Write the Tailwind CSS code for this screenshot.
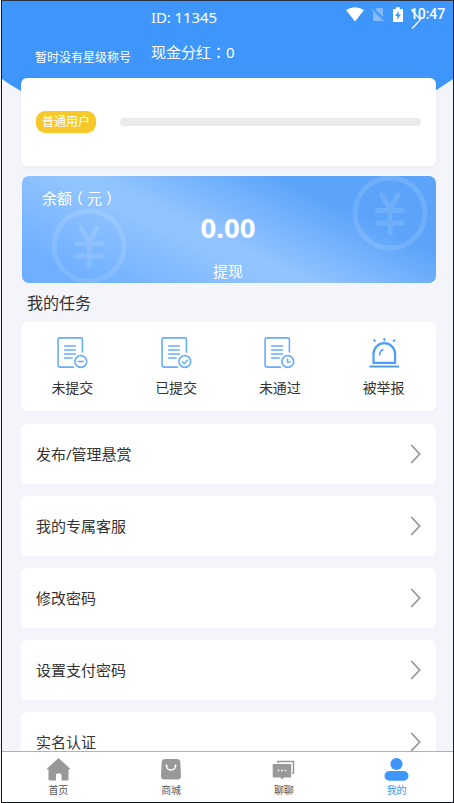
<!DOCTYPE html>
<html lang="zh-CN">
<head>
<meta charset="utf-8">
<title>我的</title>
<script src="https://cdn.jsdelivr.net/npm/@tailwindcss/browser@4"></script>
</head>
<body class="h-[803px] w-[454px] overflow-hidden bg-[#f5f5f7] pl-px font-['Noto_Sans','Noto_Sans_CJK_SC',sans-serif] text-[#333]">
<svg class="hidden">
  <symbol id="doc" viewBox="0 0 32 32"><g fill="none" stroke="#68adf9" stroke-width="1.6" stroke-linecap="round" stroke-linejoin="round"><path d="M25.4 15V2.5Q25.4.9 23.8.9H2.7Q1.1.9 1.1 2.5v26Q1.1 30.1 2.7 30.1H16.5"/><path d="M7.6 9H18.5M7.6 13H18.5M7.6 17H18.5M7.6 21H15.2"/><circle cx="23.8" cy="24.5" r="5.9"/></g></symbol>
  <symbol id="yen" viewBox="0 0 76 76"><g fill="none" stroke="currentColor" stroke-width="5"><circle cx="38" cy="38" r="35"/><path stroke-linecap="round" stroke-linejoin="round" d="M30 20l8 14 8-14M38 34v24M25.500 35.500h25M25.500 48h25"/></g></symbol>
  <symbol id="next" viewBox="0 0 11 20"><path d="M1.200 1l8.500 9-8.500 9" fill="none" stroke="currentColor" stroke-width="1.800"/></symbol>
</svg>
<div class="relative flex h-[803px] flex-col overflow-hidden border border-[#111a26] border-t-[#2b3344] bg-[#f4f5fa]">
  <svg class="absolute left-0 top-0 h-[100px] w-[451px]" viewBox="0 0 451 100" preserveAspectRatio="none"><path d="M0 0H451V78L433 90L418 99H34L19 90Q8 84 0 78Z" fill="#3e96fa"/></svg>
  <div class="absolute right-[8px] top-[5px] flex h-4 items-center text-white">
    <svg class="mr-[7px] h-[15px] w-[18px]" viewBox="0 0 18 15"><path d="M0 3Q9-2.500 18 3L9 14.500Z" fill="currentColor"/></svg>
    <svg class="mr-[8px] h-[15px] w-[14px]" viewBox="0 0 14 15"><path d="M2 4L6 1h6v13H2Z" fill="#82bafb"/><path d="M1 1l13 13" stroke="#3e96fa" stroke-width="2.500"/><path d="M.5 2l12.500 12.500" stroke="#82bafb"/></svg>
    <svg class="mr-[7px] h-[15px] w-[10px]" viewBox="0 0 10 15"><path d="M0 2h3V.2h4V2h3v13H0Z" fill="currentColor"/><path d="M6 4L2 9h2.500L3.800 13 8 7.500H5.500Z" fill="#3e96fa"/></svg>
    <span class="text-[14px]/[16px] font-medium font-[Roboto] tracking-[-0.1px]">10:47</span>
  </div>
  <svg class="absolute left-[409px] top-[9px] h-[19px] w-[11px] text-white"><path d="M1.200 1l8.300 8.500-8.300 9" fill="none" stroke="currentColor" stroke-width="1.200"/></svg>

  <header class="relative flex h-[77px] shrink-0 text-white">
    <p class="w-[149px] pl-[33px] pt-[48px] text-[12px]/[18px] whitespace-nowrap">暂时没有星级称号</p>
    <div class="flex flex-col gap-[15px] pt-[6px] text-[15px]/[20px]"><p class="tracking-[-0.1px]">ID: 11345</p><p>现金分红<span lang="zh-TW" class="font-['Noto_Sans_CJK_TC',sans-serif] leading-none">：</span>0</p></div>
  </header>

  <main class="relative flex min-h-0 flex-1 flex-col overflow-hidden pl-[19px] pr-[17px]">
    <section class="flex h-[88px] shrink-0 items-center rounded-md bg-white px-[15px] shadow-[0_2px_6px_rgba(0,0,0,0.04)]">
      <span class="h-[22px] w-[60px] rounded-[9px] bg-[#f7c829] text-center text-[12px]/[22px] text-white">普通用户</span>
      <div class="ml-6 h-2 flex-1 rounded-full bg-[#ebebeb]"></div>
    </section>

    <section class="relative ml-px mt-[10px] flex h-[107px] shrink-0 flex-col items-center overflow-hidden rounded-[7px] bg-[linear-gradient(206deg,#5ca4fa_25%,#92c4ff_54%,#92c4ff_60%,#6eafff_90%)] text-white">
      <svg class="absolute left-[29px] top-[32px] size-[76px] text-white/12"><use href="#yen"/></svg>
      <svg class="absolute right-[8px] top-[-1px] size-[76px] text-white/12"><use href="#yen"/></svg>
      <h2 class="relative mt-[12px] self-start pl-5 text-[15px]/[20px]">余额<span class="relative -left-1">（</span>元<span class="relative left-1">）</span></h2>
      <p class="relative mt-[4px] mr-[2px] text-[27.5px]/[32px] font-bold">0.00</p>
      <p class="relative mt-[17px] mr-[2px] text-[15px]/[20px]">提现</p>
    </section>

    <h2 class="mt-[10px] h-[29px] shrink-0 pl-[6px] text-[16px]/[20px]">我的任务</h2>

    <section class="grid h-[89px] shrink-0 grid-cols-4 rounded-md bg-white pt-[15px] text-center text-[14px]/[20px] shadow-[0_2px_6px_rgba(0,0,0,0.02)]">
      <div class="flex flex-col items-center gap-[9px]"><svg class="size-8" viewBox="0 0 32 32"><use href="#doc"/><path d="M20.500 24.500h6.500" stroke="#68adf9" stroke-width="1.500"/></svg><span class="mr-px">未提交</span></div>
      <div class="flex flex-col items-center gap-[9px]"><svg class="size-8" viewBox="0 0 32 32"><use href="#doc"/><path d="M20.800 24.300l2.400 2.300 3.800-3.800" fill="none" stroke="#68adf9" stroke-width="1.500"/></svg><span class="mr-px">已提交</span></div>
      <div class="flex flex-col items-center gap-[9px]"><svg class="size-8" viewBox="0 0 32 32"><use href="#doc"/><path d="M23.500 21.500v3.500h3.200" fill="none" stroke="#68adf9" stroke-width="1.500"/></svg><span class="mr-px">未通过</span></div>
      <div class="flex flex-col items-center gap-[9px]"><svg class="size-8" viewBox="0 0 32 32" fill="none" stroke="#4c9dfa"><path d="M5.500 25.800V17a10.800 10.800 0 0 1 21.600 0v8.800Z" stroke-width="2.200"/><path d="M11.500 18.500q.2-5 4-6" stroke-width="1.500"/><path d="M1.500 29.500h29.500" stroke-width="2"/><path d="M16.300 1v3M5.500 2.500l2 2.200M27.100 2.500l-2 2.200" stroke-width="1.800"/></svg><span class="mr-px">被举报</span></div>
    </section>

    <nav class="mt-[13px] flex flex-col gap-3 text-[15px]/[20px]">
      <a class="flex h-[60px] shrink-0 items-center justify-between rounded-md bg-white px-[15px]">发布/管理悬赏<svg class="h-5 w-[11px] text-[#999]"><use href="#next"/></svg></a>
      <a class="flex h-[60px] shrink-0 items-center justify-between rounded-md bg-white px-[15px]">我的专属客服<svg class="h-5 w-[11px] text-[#999]"><use href="#next"/></svg></a>
      <a class="flex h-[60px] shrink-0 items-center justify-between rounded-md bg-white px-[15px]">修改密码<svg class="h-5 w-[11px] text-[#999]"><use href="#next"/></svg></a>
      <a class="flex h-[60px] shrink-0 items-center justify-between rounded-md bg-white px-[15px]">设置支付密码<svg class="h-5 w-[11px] text-[#999]"><use href="#next"/></svg></a>
      <a class="flex h-[60px] shrink-0 items-center justify-between rounded-md bg-white px-[15px]">实名认证<svg class="h-5 w-[11px] text-[#999]"><use href="#next"/></svg></a>
    </nav>
  </main>

  <footer class="relative grid h-[51px] shrink-0 grid-cols-4 border-t border-[#b2b2b2] bg-white pt-[5px] text-[10px]/[14px] text-[#555]">
    <div class="flex flex-col items-center gap-[2px]"><svg class="h-6 w-[25px]" viewBox="0 0 25 24"><path d="M12.500 1L24 11.500q.8 1-.5 1H22.500V22q0 1.500-1.500 1.500H15.500V18q0-1.500-1.500-1.500h-2.500q-1.500 0-1.500 1.500v5.500H4Q2.500 23.500 2.500 22v-9.500h-1q-1.300 0-.5-1Z" fill="#999"/></svg>首页</div>
    <div class="flex flex-col items-center gap-[2px]"><svg class="h-6 w-[22px]" viewBox="0 0 22 24"><path d="M5 2h12q3 0 3.300 3L21 19q0 3.500-3.300 3.500H4.300Q1 22.500 1 19L1.700 5Q2 2 5 2Z" fill="#999"/><path d="M6.500 8.500q0 4.500 4.500 4.500t4.500-4.500" fill="none" stroke="#fff" stroke-width="1.300"/><circle cx="6.500" cy="8.700" r="1.100" fill="#fff"/><circle cx="15.500" cy="8.700" r="1.100" fill="#fff"/></svg>商城</div>
    <div class="flex flex-col items-center gap-[2px]"><svg class="h-6 w-[23px]" viewBox="0 0 23 24"><path d="M6 6V4.500h15.500V16H20" fill="none" stroke="#999" stroke-width="1.500"/><path d="M1.500 7h17q.7 0 .7.700v12q0 .8-.7.800H12L10 22.500 8.500 20.500h-7q-.8 0-.8-.8v-12Q.7 7 1.500 7Z" fill="#999"/><path d="M5.700 13.500h1.600M9.200 13.500h1.600M12.700 13.500h1.600" stroke="#fff" stroke-width="1.600"/></svg>聊聊</div>
    <div class="flex flex-col items-center gap-[2px] text-[#3e96fa]"><svg class="h-6 w-[25px]" viewBox="0 0 25 24" fill="currentColor"><circle cx="12.500" cy="7" r="6.100"/><rect x=".5" y="14" width="24" height="9.800" rx="4.900"/></svg>我的</div>
  </footer>
</div>
</body>
</html>
